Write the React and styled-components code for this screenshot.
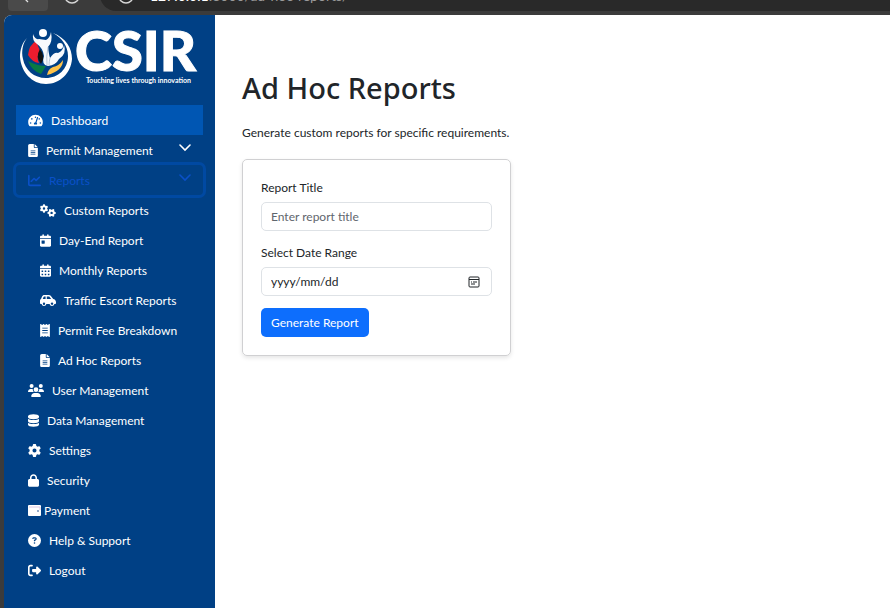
import React, { useState } from "react";
import styled, { createGlobalStyle, css } from "styled-components";
import { FaTachometerAlt } from "react-icons/fa";
import {
  FaFileLines, FaChartLine, FaGears, FaCalendarDay, FaCalendarDays,
  FaCarSide, FaReceipt, FaUsers, FaDatabase, FaGear, FaLock,
  FaCircleQuestion, FaRightFromBracket,
} from "react-icons/fa6";

const GlobalStyle = createGlobalStyle`
  *, *::before, *::after { box-sizing: border-box; }
  body {
    margin: 0;
    background: #3b3b3b;
    color: #212529;
    font-family: Lato, "Noto Sans", sans-serif;
    font-size: 12px;
    line-height: 20px;
  }
  button, input { font: inherit; }
`;

const Shell = styled.div`
  display: flex;
  flex-direction: column;
  min-height: 100vh;
`;

const BrowserBar = styled.header`
  display: flex;
  align-items: flex-end;
  height: 15px;
  padding: 0 0 4px 8px;
  overflow: hidden;
  background: #3b3b3b;
`;

const BackButton = styled.button`
  display: flex;
  align-items: flex-end;
  justify-content: center;
  width: 40px;
  height: 30px;
  padding: 0 0 8px;
  border: 0;
  border-radius: 4px;
  background: #4a4a4a;
  color: #e4e4e4;
`;

const ReloadButton = styled.button`
  display: flex;
  align-items: flex-end;
  justify-content: center;
  width: 48px;
  height: 30px;
  padding: 0 0 7px;
  border: 0;
  background: none;
  color: #d6d6d6;
`;

const AddressBar = styled.div`
  display: flex;
  flex: 1;
  align-items: flex-end;
  gap: 16px;
  height: 32px;
  margin-left: 4px;
  padding: 0 0 7px 18px;
  border-radius: 16px 0 0 16px;
  background: #292929;
  color: #9a9a9a;
  font-size: 14px;
  line-height: 16px;
`;

const Host = styled.span`
  color: #ffffff;
`;

const Page = styled.div`
  display: flex;
  flex: 1;
  margin-left: 4px;
  border-top-left-radius: 8px;
  overflow: hidden;
  background: #ffffff;
`;

const Sidebar = styled.aside`
  flex: 0 0 210px;
  padding: 10px 12px;
  background: #004085;
  color: #ffffff;
`;

const LogoLink = styled.a`
  display: block;
  height: 65px;
  margin: 0 0 15px 3px;

  svg { display: block; }
`;

const NavList = styled.ul`
  margin: 0;
  padding: 0;
  list-style: none;
`;

const SubList = styled(NavList)`
  padding-left: 12px;
`;

const navItem = css`
  display: flex;
  align-items: center;
  gap: ${(p) => (p.$tight ? "3px" : "8px")};
  width: 100%;
  height: 30px;
  padding: 1px 12px 0;
  border: 0;
  background: ${(p) => (p.$active ? "#0056b3" : "transparent")};
  color: #ffffff;
  text-align: left;
  text-decoration: none;
  white-space: nowrap;
`;

const NavLink = styled.a`
  ${navItem}
`;

const NavToggle = styled.button`
  ${navItem}
  cursor: pointer;

  ${(p) => p.$focused && css`
    border-radius: 4px;
    box-shadow: 0 0 0 3px #0049a2;
    color: #0a50c8;
  `}
`;

const IconBox = styled.span`
  display: flex;
  flex: none;
  width: ${(p) => p.$width}px;

  svg {
    width: 100%;
    height: 13px;
  }
`;

const Chevron = styled.span`
  display: flex;
  height: 16px;
  margin-left: auto;
`;

const Content = styled.main`
  flex: 1;
  min-width: 0;
  padding: 55px 27px;
`;

const Title = styled.h1`
  margin: 0 0 16px;
  font-family: "Noto Sans", sans-serif;
  font-size: 29px;
  font-weight: 500;
  line-height: 36px;
`;

const Panel = styled.div`
  width: fit-content;
  min-width: 269px;
`;

const Lead = styled.p`
  margin: 0;
  padding: 1px 0 16px;
`;

const Card = styled.form`
  padding: 18px;
  border: 1px solid #d0d0d2;
  border-radius: 5px;
  box-shadow: 0 2px 4px rgba(0, 0, 0, 0.1);
`;

const Field = styled.div`
  display: flex;
  flex-direction: column;
  gap: 4px;
  margin-bottom: 12px;
`;

const InputFrame = styled.div`
  display: flex;
  align-items: center;
  height: 29px;
  padding: 1px 11px 0 9px;
  border: 1px solid #dee2e6;
  border-radius: 5px;
`;

const TextInput = styled.input`
  flex: 1;
  min-width: 0;
  padding: 0;
  border: 0;
  outline: 0;
  background: none;
  color: #212529;

  &::placeholder {
    color: ${(p) => (p.$dark ? "#212529" : "#5f666d")};
    opacity: 1;
  }
`;

const PickerButton = styled.button`
  display: flex;
  padding: 0;
  border: 0;
  background: none;
  color: #212529;
`;

const SubmitButton = styled.button`
  height: 29px;
  padding: 1px 10px 0;
  border: 0;
  border-radius: 5px;
  background: #0d6efd;
  color: #ffffff;
`;

function Logo() {
  return (
    <svg width="184" height="65" viewBox="0 0 184 65" role="img" aria-label="CSIR Touching lives through innovation">
      <path d="M8 13C3 18 1 25 1 32C2 47 13 59 27 59C41 59 52 48 53 34C53 23 47 13 34 8C43 13 49 21 49 31C49 44 39 53 27 53C15 53 6 45 4 34C2 26 4 18 8 13Z" fill="#fff" />
      <path d="M17 16L21 26Q17 32 20 38Q13 37 9 30Q10 20 17 16Z" fill="#ed1c2e" />
      <path d="M21 24Q27 32 22 39Q16 32 21 24Z" fill="#111" />
      <path d="M9 36Q18 41 27 41L22 49Q13 46 9 36Z" fill="#087a43" />
      <path d="M44 35Q44 46 28 50Q29 44 34 42Q40 41 44 35Z" fill="#ffc247" />
      <path d="M14 9Q16 15 20 14L27 15Q31 13 32 7Q34 17 29 22Q30 30 31 33Q35 27 39 28Q44 26 45 20Q48 29 40 34Q37 40 29 41Q22 40 25 31Q24 23 18 19Q13 16 14 9Z" fill="#f7f9fc" />
      <path d="M29 22Q27 32 28 40M31 33Q30 37 30 40" fill="none" stroke="#b9c8da" strokeWidth="1" />
      <circle cx="24" cy="8" r="4" fill="#fff" />
      <circle cx="41" cy="21" r="3" fill="#fff" />
      <text x="56" y="46" fill="#fff" stroke="#fff" strokeWidth="1" fontFamily="Lato, sans-serif" fontWeight="900" fontSize="56">CSIR</text>
      <text x="67" y="58" fill="#fff" fontFamily="Lato, sans-serif" fontWeight="700" fontSize="7">Touching lives through innovation</text>
    </svg>
  );
}

function ChevronIcon() {
  return (
    <svg width="12" height="9" viewBox="0 0 12 9" aria-hidden="true">
      <path d="M1 2L6 7L11 2" fill="none" stroke="currentColor" strokeWidth="1.600" strokeLinecap="round" />
    </svg>
  );
}

function WalletIcon() {
  return (
    <svg viewBox="0 0 13 13" aria-hidden="true">
      <rect x="0" y="1" width="13" height="11" rx="1" fill="#fff" />
      <path d="M1 3H12V6" fill="none" stroke="#dcc8e4" />
      <circle cx="10" cy="7" r="1" fill="#6f8fb8" />
    </svg>
  );
}

function CalendarIcon() {
  return (
    <svg width="12" height="12" viewBox="0 0 12 12" aria-hidden="true">
      <rect x="1" y="1" width="10" height="10" rx="1" fill="none" stroke="currentColor" />
      <path d="M1 3.500H11M5 6H9M3 8H7M3 6H4" fill="none" stroke="currentColor" />
    </svg>
  );
}

const reportLinks = [
  { label: "Custom Reports", icon: FaGears, iconWidth: 16 },
  { label: "Day-End Report", icon: FaCalendarDay, iconWidth: 11 },
  { label: "Monthly Reports", icon: FaCalendarDays, iconWidth: 11 },
  { label: "Traffic Escort Reports", icon: FaCarSide, iconWidth: 16 },
  { label: "Permit Fee Breakdown", icon: FaReceipt, iconWidth: 10 },
  { label: "Ad Hoc Reports", icon: FaFileLines, iconWidth: 10 },
];

const mainLinks = [
  { label: "User Management", icon: FaUsers, iconWidth: 16 },
  { label: "Data Management", icon: FaDatabase, iconWidth: 11 },
  { label: "Settings", icon: FaGear, iconWidth: 13 },
  { label: "Security", icon: FaLock, iconWidth: 11 },
  { label: "Payment", icon: WalletIcon, iconWidth: 13, tight: true },
  { label: "Help & Support", icon: FaCircleQuestion, iconWidth: 13 },
  { label: "Logout", icon: FaRightFromBracket, iconWidth: 13 },
];

function NavEntry({ label, icon: Icon, iconWidth, active, tight }) {
  return (
    <li>
      <NavLink href="#" $active={active} $tight={tight}>
        <IconBox $width={iconWidth}><Icon aria-hidden="true" /></IconBox>
        {label}
      </NavLink>
    </li>
  );
}

export default function App() {
  const [open, setOpen] = useState(true);
  return (
    <>
      <GlobalStyle />
      <Shell>
        <BrowserBar>
          <BackButton aria-label="Back">
            <svg width="14" height="14" viewBox="0 0 14 14"><path d="M7 1L1 7L7 13" fill="none" stroke="currentColor" strokeWidth="1.300" /></svg>
          </BackButton>
          <ReloadButton aria-label="Reload">
            <svg width="16" height="16" viewBox="0 0 16 16"><circle cx="8" cy="8" r="7" fill="none" stroke="currentColor" strokeWidth="1.500" /></svg>
          </ReloadButton>
          <AddressBar>
            <svg width="16" height="16" viewBox="0 0 16 16" aria-hidden="true"><circle cx="8" cy="8" r="7" fill="none" stroke="#d6d6d6" strokeWidth="1.500" /></svg>
            <span><Host>127.0.0.1</Host>:8000/ad-hoc-reports/</span>
          </AddressBar>
        </BrowserBar>
        <Page>
          <Sidebar>
            <LogoLink href="#"><Logo /></LogoLink>
            <nav>
              <NavList>
                <NavEntry label="Dashboard" icon={FaTachometerAlt} iconWidth={15} active />
                <li>
                  <NavToggle type="button">
                    <IconBox $width={10}><FaFileLines aria-hidden="true" /></IconBox>
                    Permit Management
                    <Chevron><ChevronIcon /></Chevron>
                  </NavToggle>
                </li>
                <li>
                  <NavToggle type="button" $focused aria-expanded={open} onClick={() => setOpen(!open)}>
                    <IconBox $width={13}><FaChartLine aria-hidden="true" /></IconBox>
                    Reports
                    <Chevron><ChevronIcon /></Chevron>
                  </NavToggle>
                  {open && (
                    <SubList>
                      {reportLinks.map((link) => <NavEntry key={link.label} {...link} />)}
                    </SubList>
                  )}
                </li>
                {mainLinks.map((link) => <NavEntry key={link.label} {...link} />)}
              </NavList>
            </nav>
          </Sidebar>
          <Content>
            <Title>Ad Hoc Reports</Title>
            <Panel>
              <Lead>Generate custom reports for specific requirements.</Lead>
              <Card onSubmit={(e) => e.preventDefault()}>
                <Field>
                  <label htmlFor="report-title">Report Title</label>
                  <InputFrame>
                    <TextInput id="report-title" placeholder="Enter report title" />
                  </InputFrame>
                </Field>
                <Field>
                  <label htmlFor="report-date">Select Date Range</label>
                  <InputFrame>
                    <TextInput id="report-date" placeholder="yyyy/mm/dd" $dark />
                    <PickerButton type="button" aria-label="Open calendar"><CalendarIcon /></PickerButton>
                  </InputFrame>
                </Field>
                <SubmitButton type="submit">Generate Report</SubmitButton>
              </Card>
            </Panel>
          </Content>
        </Page>
      </Shell>
    </>
  );
}
